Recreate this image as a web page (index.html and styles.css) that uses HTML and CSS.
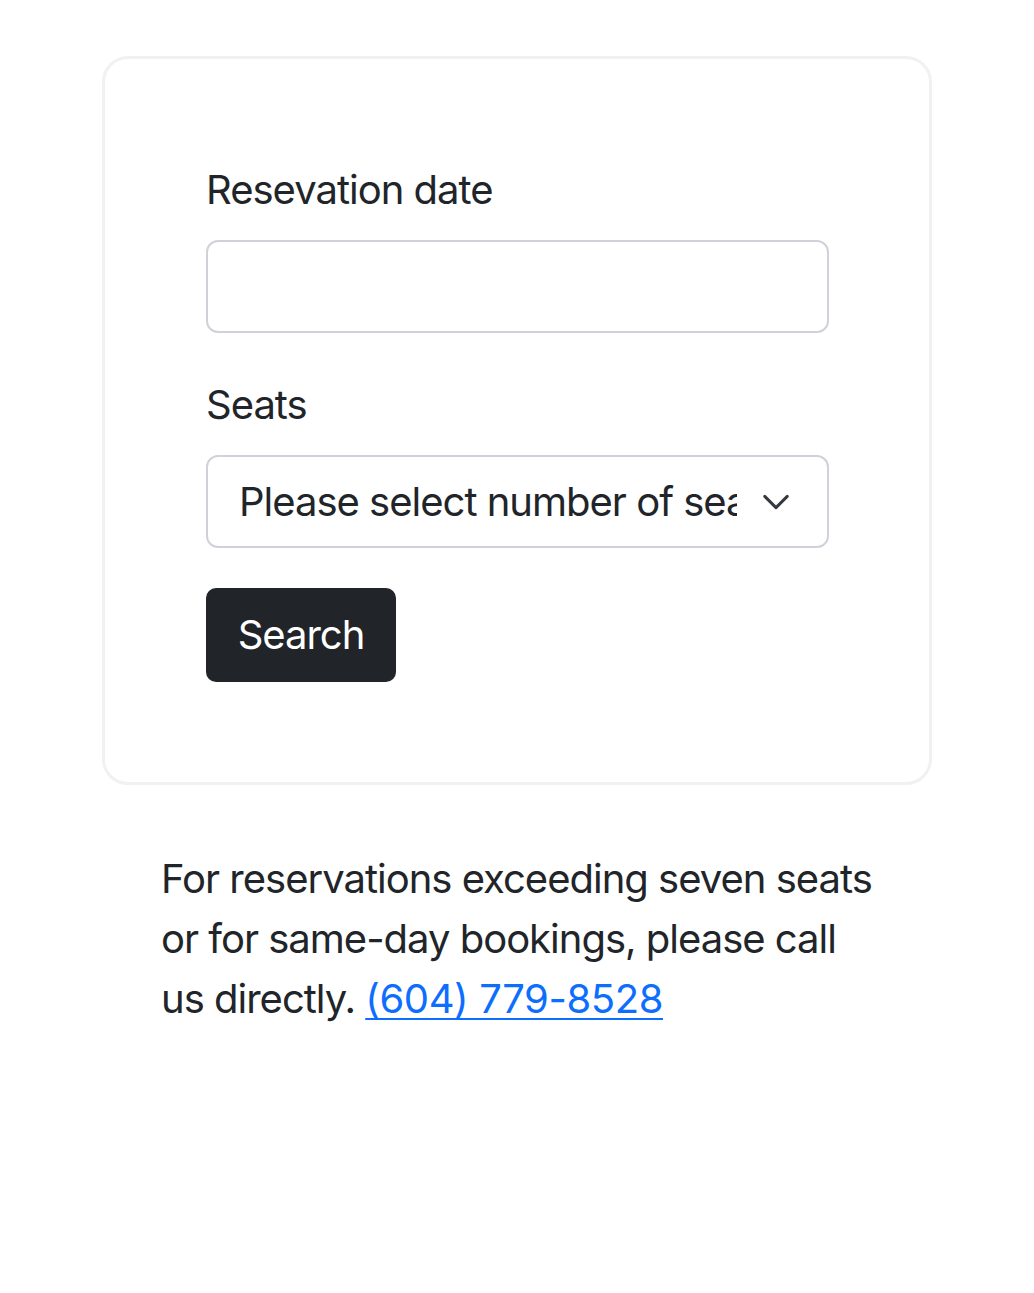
FILE: index.html
```html
<!DOCTYPE html>
<html lang="en">
<head>
<meta charset="utf-8">
<title>Reservation</title>
<link rel="stylesheet" href="styles.css">
</head>
<body>
<main class="page">
  <section class="card">
    <form class="form">
      <label class="label" for="date">Resevation date</label>
      <input class="input" id="date" type="text">
      <label class="label">Seats</label>
      <div class="select">
        <span class="select-text">Please select number of seats</span>
        <svg class="chevron" viewBox="0 0 16 16" width="30" height="30" aria-hidden="true"><path d="M2 5l6 6 6-6" fill="none" stroke="#343a40" stroke-width="1.6" stroke-linecap="round" stroke-linejoin="round"/></svg>
      </div>
      <button class="btn" type="button">Search</button>
    </form>
  </section>
  <p class="note">For reservations exceeding seven seats or for same-day bookings, please call us directly. <a href="#" class="phone">(604) 779-8528</a></p>
</main>
</body>
</html>
```
FILE: styles.css
```css
* { box-sizing: border-box; }
html, body { margin: 0; padding: 0; background: #fff; }
body {
  font-family: Inter, "Noto Sans", "Liberation Sans", sans-serif;
  font-size: 40px;
  line-height: 60px;
  letter-spacing: -1px;
  color: #212529;
}
.page {
  padding: 56px 102px 0 102px;
}
.card {
  border: 3px solid #f1f1f1;
  border-radius: 26px;
  padding: 101px 100px 100px 101px;
}
.form {
  display: flex;
  flex-direction: column;
  align-items: flex-start;
}
.label {
  display: block;
  margin-bottom: 20px;
}
.input {
  width: 100%;
  height: 93px;
  border: 2px solid #d0d2da;
  border-radius: 12px;
  margin: 0 0 42px 0;
  font: inherit;
  padding: 0 31px;
  background: #fff;
}
.select {
  width: 100%;
  height: 93px;
  border: 2px solid #d0d2da;
  border-radius: 12px;
  margin-bottom: 40px;
  display: flex;
  align-items: center;
  padding: 0 36px 0 31px;
}
.select-text {
  flex: 1;
  overflow: hidden;
  white-space: nowrap;
  margin-right: 24px;
}
.chevron { flex: none; }
.btn {
  font: inherit;
  letter-spacing: inherit;
  color: #fff;
  background: #212529;
  border: 0;
  border-radius: 10px;
  height: 94px;
  width: 190px;
  padding: 0;
}
.note {
  margin: 64px 52px 0 59px;
}
.phone {
  color: #0d6efd;
  letter-spacing: -0.4px;
  text-decoration: underline;
  text-decoration-thickness: 2px;
  text-underline-offset: 5px;
}
```
